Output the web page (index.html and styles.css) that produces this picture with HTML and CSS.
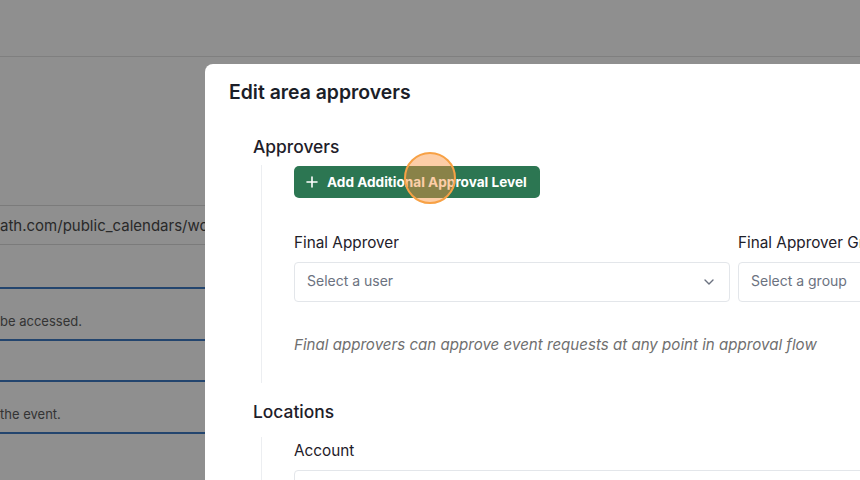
FILE: index.html
```html
<!DOCTYPE html>
<html lang="en">
<head>
<meta charset="utf-8">
<title>Edit area approvers</title>
<link rel="stylesheet" href="styles.css">
</head>
<body>
  <div class="page">
    <header class="page-header"></header>
    <main class="page-body">
      <div class="url-field">ath.com/public_calendars/workspace-events</div>
      <div class="field-gap"></div>
      <div class="help-block"><span class="help-text">be accessed.</span></div>
      <div class="field-spacer"></div>
      <div class="help-block"><span class="help-text">the event.</span></div>
    </main>
  </div>

  <div class="backdrop"></div>

  <section class="modal" role="dialog" aria-labelledby="modal-title">
    <h2 class="modal-title" id="modal-title">Edit area approvers</h2>

    <div class="group">
      <h3 class="group-title">Approvers</h3>
      <div class="group-body group-body--approvers">
        <button class="btn-add" type="button">
          <svg class="btn-icon" viewBox="0 0 12 12" width="12" height="12" aria-hidden="true">
            <path d="M6 1v10M1 6h10" fill="none" stroke="currentColor" stroke-width="1.6" stroke-linecap="round"/>
          </svg>
          <span>Add Additional Approval Level</span>
        </button>

        <div class="field-grid">
          <div class="field">
            <label class="field-label">Final Approver</label>
            <div class="select">
              <span class="select-placeholder">Select a user</span>
              <svg class="chevron" viewBox="0 0 10 6" width="10" height="6" aria-hidden="true">
                <path d="M1 1l4 4 4-4" fill="none" stroke="currentColor" stroke-width="1.4" stroke-linecap="round" stroke-linejoin="round"/>
              </svg>
            </div>
          </div>
          <div class="field">
            <label class="field-label">Final Approver Group</label>
            <div class="select">
              <span class="select-placeholder">Select a group</span>
            </div>
          </div>
        </div>

        <p class="hint">Final approvers can approve event requests at any point in approval flow</p>
      </div>
    </div>

    <div class="group">
      <h3 class="group-title group-title--locations">Locations</h3>
      <div class="group-body group-body--locations">
        <label class="field-label">Account</label>
        <div class="select select--wide"></div>
      </div>
    </div>
  </section>

  <div class="click-marker" aria-hidden="true"></div>
</body>
</html>
```

FILE: styles.css
```css
* { box-sizing: border-box; }

html, body {
  margin: 0;
  height: 100%;
  overflow: hidden;
}

body {
  font-family: Inter, "Liberation Sans", sans-serif;
  background: #ffffff;
  color: #1e2029;
}

/* underlying page */
.page-header {
  height: 57px;
  border-bottom: 1px solid #e2e2e2;
}

.page-body {
  padding-top: 148px;
}

.url-field {
  height: 40px;
  border-top: 1px solid #dcdcdc;
  border-bottom: 1px solid #dcdcdc;
  font-size: 15px;
  line-height: 39px;
  color: #4a4a4a;
  white-space: nowrap;
  overflow: hidden;
}

.field-gap { height: 42px; }

.help-block {
  height: 54px;
  border-top: 2px solid #3f7cc4;
  border-bottom: 2px solid #3f7cc4;
  display: flex;
  align-items: flex-end;
  padding-bottom: 9px;
}

.help-text {
  font-size: 13px;
  line-height: 18px;
  color: #5d5d5d;
}

.field-spacer { height: 39px; }

/* dimming layer */
.backdrop {
  position: fixed;
  inset: 0;
  background: rgba(0, 0, 0, 0.44);
}

/* dialog */
.modal {
  position: fixed;
  left: 205px;
  top: 64px;
  width: 720px;
  height: 480px;
  background: #ffffff;
  border-radius: 8px;
  padding: 16px 24px 0;
}

.modal-title {
  margin: 0;
  font-size: 19.4px;
  line-height: 24px;
  font-weight: 600;
  color: #1b1e28;
}

.group {
  padding-left: 24px;
}

.group-title {
  margin: 31px 0 0;
  font-size: 17.4px;
  line-height: 24px;
  font-weight: 500;
  color: #1e2029;
}

.group-title--locations {
  margin-top: 17px;
}

.group-body {
  margin-left: 8px;
  border-left: 1px solid #eceef1;
  padding-left: 32px;
}

.group-body--approvers {
  margin-top: 6px;
  padding-top: 1px;
  padding-bottom: 28px;
}

.group-body--locations {
  margin-top: 13px;
  padding-top: 4px;
}

.btn-add {
  display: inline-flex;
  align-items: center;
  gap: 9px;
  height: 32px;
  padding: 0 13px 0 12px;
  border: 0;
  border-radius: 5px;
  background: #2c7652;
  color: #ffffff;
  font-family: inherit;
  font-size: 13.6px;
  font-weight: 700;
  cursor: pointer;
}

.btn-icon { display: block; }

.field-grid {
  display: grid;
  grid-template-columns: 436px 436px;
  column-gap: 8px;
  margin-top: 35px;
}

.field-label {
  display: block;
  font-size: 15.3px;
  line-height: 20px;
  font-weight: 400;
  color: #1e2029;
}

.select {
  margin-top: 9px;
  height: 40px;
  border: 1px solid #e3e6ea;
  border-radius: 4px;
  display: flex;
  align-items: center;
  justify-content: space-between;
  padding: 0 15px 0 12px;
}

.select--wide {
  margin-top: 9px;
  width: 600px;
}

.select-placeholder {
  font-size: 14px;
  line-height: 20px;
  margin-top: -2px;
  color: #6b7280;
}

.chevron {
  color: #6b7280;
  display: block;
}

.hint {
  margin: 33px 0 0;
  font-size: 15.1px;
  line-height: 20px;
  font-style: italic;
  color: #6f6f6f;
}

/* pointer highlight */
.click-marker {
  position: fixed;
  left: 404px;
  top: 152px;
  width: 52px;
  height: 52px;
  border-radius: 50%;
  border: 2px solid #f7a145;
  background: rgba(251, 146, 60, 0.45);
}
```
